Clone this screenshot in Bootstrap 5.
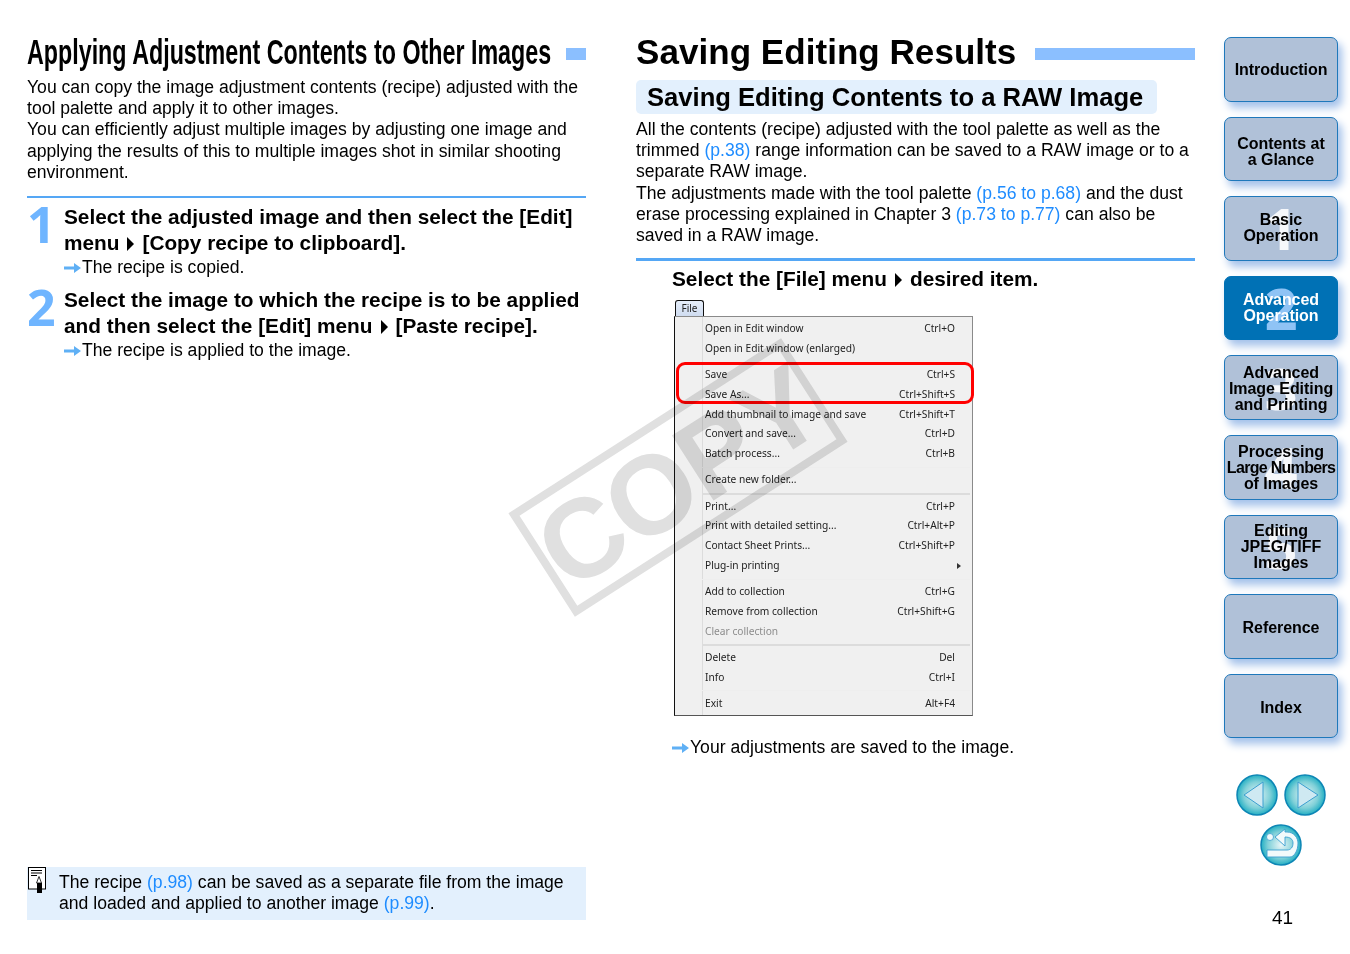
<!DOCTYPE html>
<html lang="en"><head><meta charset="utf-8"><title>Saving Editing Results</title>
<link href="https://cdn.jsdelivr.net/npm/bootstrap@5.3.0/dist/css/bootstrap.min.css" rel="stylesheet">
<style>
html,body{height:954px;overflow:hidden;background:#fff}
body{font-family:"Liberation Sans",Arial,sans-serif;color:#000;font-size:17.6px;line-height:21.2px}
.pg{height:954px;padding-left:27px}
.lcol{width:559px;margin-right:50px;padding-top:33px;padding-bottom:34px}
.rcol{width:559px;margin-right:29px;padding-top:33px;position:relative}
.navc{width:114px;padding-top:37px}
.ttlw{width:524px;flex:none;height:38px}
.ttl-l{display:inline-block;font-size:35px;line-height:38px;font-weight:700;margin:0;white-space:nowrap;transform:scaleX(.665);transform-origin:0 0}
.ttl-r{font-size:35px;line-height:38px;font-weight:700;margin:0;white-space:nowrap;letter-spacing:.05px}
.tbar{background:#8bbfff;height:12px;margin-top:3px}
.sub{background:#e3f0fd;border-radius:5px;font-size:25.6px;line-height:34px;font-weight:700;margin:9px 0 0;padding:0 14px 0 11px;display:inline-block;white-space:nowrap}
.para{margin:0}
.ln{color:#1e8cff;text-decoration:none}
.rule{height:3px;background:#55a7f5}
.stp{font-size:20.8px;line-height:26px;font-weight:700;margin:0}
.num{width:37px;font-family:"Open Sans",sans-serif;font-weight:700;font-size:50px;line-height:40px;color:#6fb5ff;flex:none}
.tri{display:inline-block;border-left:7px solid #000;border-top:7px solid transparent;border-bottom:7px solid transparent;margin:0 8px 0 8px;vertical-align:-1px}
.arw{width:18px;height:12px;vertical-align:-1px}
.res{margin-top:1px}
.tip{background:#e3f0fd;height:53px;padding:5px 0 0 32px;position:relative}
.tipic{position:absolute;left:1px;top:0;width:18px;height:26px}
.shot{width:299px;margin-left:38px}
.ftab{width:29px;height:16px;margin-top:0;border:1px solid #111;border-bottom:0;border-radius:3px 3px 0 0;background:linear-gradient(#e6eefa,#cfdcf0);font:10px/15px "Noto Sans",sans-serif;text-align:center;color:#222;margin-left:1px}
.mnu{height:400px;background:#f0f0f0;border:1px solid #8a8a8a;border-left:1px solid #111;border-bottom-color:#555;padding:2px 17px 0 1px;position:relative;font:10.2px/19.7px "Noto Sans",sans-serif;color:#222}
.gut{position:absolute;left:27px;top:0;bottom:0;width:1px;background:#dcdcdc}
.mi{padding-left:29px;height:19.7px;white-space:nowrap}
.gap{height:6.7px;margin-left:26px;position:relative}
.gap::after{content:"";position:absolute;left:0;right:-15px;top:3px;height:1px;background:#eee}
.gap.dk::after{background:#dcdcdc;height:2px}
.off{color:#8c8c8c}
.sel{position:absolute;left:1px;top:45px;width:298px;height:42px;border:3px solid #f00;border-radius:9px}
.wm{position:absolute;left:-120px;top:416px;width:324px;height:123px;transform:rotate(-32.7deg);border:8px solid #8a8a8a;opacity:.27;pointer-events:none;font:700 112px/107px "Liberation Sans",sans-serif;color:#8a8a8a;text-align:center;letter-spacing:-2px;overflow:hidden;mix-blend-mode:multiply}
.nb{height:64.6px;background:#b0c1d8;border:1px solid #1e78bb;border-radius:7px;box-shadow:4px 6px 8px #a3c1ea;font-size:16px;line-height:16px;font-weight:700;position:relative;text-align:center;color:#000;letter-spacing:-.05px}
.nb.on{background:#0071b5;border-color:#0071b5;color:#fff}
.big{position:absolute;inset:0;display:flex;align-items:center;justify-content:center;font-family:"Open Sans",sans-serif;font-weight:700;font-size:58px;line-height:1;color:rgba(255,255,255,.88)}
.nb.on .big{color:#8fc3f5}
.nt{position:relative;white-space:nowrap}
.rbtn{width:42px;height:42px;display:block}
.pno{font-size:19px;line-height:22px;padding-left:48px}
.nudge1{top:1px}
.nudge2{top:2px}
.nudge3{top:3px}
</style></head><body>
<div class="pg d-flex">
 <div class="lcol d-flex flex-column">
  <div class="d-flex align-items-center justify-content-between"><div class="ttlw"><h1 class="ttl-l">Applying Adjustment Contents to Other Images</h1></div><div class="tbar" style="width:20px"></div></div>
  <p class="para" style="margin-top:6px">You can copy the image adjustment contents (recipe) adjusted with the tool palette and apply it to other images.<br>You can efficiently adjust multiple images by adjusting one image and applying the results of this to multiple images shot in similar shooting environment.</p>
  <div class="rule" style="height:2px;margin-top:13px"></div>
  <div class="d-flex" style="margin-top:6px">
   <div class="num">1</div>
   <div><p class="stp">Select the adjusted image and then select the [Edit] menu<span class="tri"></span>[Copy recipe to clipboard].</p>
   <div class="res"><svg class="arw" viewBox="0 0 18 12"><path d="M0 4.5h10V1l7 5-7 5V7.5H0z" fill="#5fb0f5"/></svg>The recipe is copied.</div></div>
  </div>
  <div class="d-flex" style="margin-top:9px">
   <div class="num">2</div>
   <div><p class="stp">Select the image to which the recipe is to be applied and then select the [Edit] menu<span class="tri"></span>[Paste recipe].</p>
   <div class="res"><svg class="arw" viewBox="0 0 18 12"><path d="M0 4.5h10V1l7 5-7 5V7.5H0z" fill="#5fb0f5"/></svg>The recipe is applied to the image.</div></div>
  </div>
  <div class="tip mt-auto">
   <svg class="tipic" viewBox="0 0 18 26"><rect x=".5" y=".5" width="17" height="21.5" fill="#fff" stroke="#000"/><path d="M3 3.5h11M3 6h11M3 8.5h6" stroke="#000"/><path d="M11.5 9.5l2.500 6.500h-5z" fill="#fff" stroke="#000" stroke-width=".8" transform="translate(-.5 0)"/><rect x="9" y="16" width="5" height="10" fill="#000"/></svg>
   The recipe <a class="ln" href="#">(p.98)</a> can be saved as a separate file from the image and loaded and applied to another image <a class="ln" href="#">(p.99)</a>.
  </div>
 </div>
 <div class="rcol">
  <div class="d-flex align-items-center"><h1 class="ttl-r">Saving Editing Results</h1><div class="tbar flex-grow-1" style="margin-left:19px"></div></div>
  <h2 class="sub">Saving Editing Contents to a RAW Image</h2>
  <p class="para" style="margin-top:5px">All the contents (recipe) adjusted with the tool palette as well as the trimmed <a class="ln" href="#">(p.38)</a> range information can be saved to a RAW image or to a separate RAW image.<br>The adjustments made with the tool palette <a class="ln" href="#">(p.56 to p.68)</a> and the dust erase processing explained in Chapter 3 <a class="ln" href="#">(p.73 to p.77)</a> can also be saved in a RAW image.</p>
  <div class="rule" style="margin-top:12px"></div>
  <p class="stp" style="margin:5px 0 8px 36px">Select the [File] menu<span class="tri"></span>desired item.</p>
  <div class="shot">
   <div class="ftab">File</div>
   <div class="mnu">
    <div class="gut"></div>
    <div class="mi d-flex justify-content-between"><span>Open in Edit window</span><span>Ctrl+O</span></div>
    <div class="mi">Open in Edit window (enlarged)</div>
    <div class="gap"></div>
    <div class="mi d-flex justify-content-between"><span>Save</span><span>Ctrl+S</span></div>
    <div class="mi d-flex justify-content-between"><span>Save As...</span><span>Ctrl+Shift+S</span></div>
    <div class="mi d-flex justify-content-between"><span>Add thumbnail to image and save</span><span>Ctrl+Shift+T</span></div>
    <div class="mi d-flex justify-content-between"><span>Convert and save...</span><span>Ctrl+D</span></div>
    <div class="mi d-flex justify-content-between"><span>Batch process...</span><span>Ctrl+B</span></div>
    <div class="gap"></div>
    <div class="mi">Create new folder...</div>
    <div class="gap dk"></div>
    <div class="mi d-flex justify-content-between"><span>Print...</span><span>Ctrl+P</span></div>
    <div class="mi d-flex justify-content-between"><span>Print with detailed setting...</span><span>Ctrl+Alt+P</span></div>
    <div class="mi d-flex justify-content-between"><span>Contact Sheet Prints...</span><span>Ctrl+Shift+P</span></div>
    <div class="mi d-flex justify-content-between position-relative"><span>Plug-in printing</span><svg style="position:absolute;right:-6px;top:7px;width:4px;height:6px" viewBox="0 0 4 6"><path d="M0 0l4 3-4 3z" fill="#333"/></svg></div>
    <div class="gap"></div>
    <div class="mi d-flex justify-content-between"><span>Add to collection</span><span>Ctrl+G</span></div>
    <div class="mi d-flex justify-content-between"><span>Remove from collection</span><span>Ctrl+Shift+G</span></div>
    <div class="mi off">Clear collection</div>
    <div class="gap dk"></div>
    <div class="mi d-flex justify-content-between"><span>Delete</span><span>Del</span></div>
    <div class="mi d-flex justify-content-between"><span>Info</span><span>Ctrl+I</span></div>
    <div class="gap"></div>
    <div class="mi d-flex justify-content-between"><span>Exit</span><span>Alt+F4</span></div>
    <div class="sel"></div>
   </div>
  </div>
  <div style="margin:21px 0 0 36px"><svg class="arw" viewBox="0 0 18 12"><path d="M0 4.5h10V1l7 5-7 5V7.5H0z" fill="#5fb0f5"/></svg>Your adjustments are saved to the image.</div>
  <div class="wm">COPY</div>
 </div>
 <div class="navc">
  <nav class="d-flex flex-column" style="gap:15px">
   <a class="nb d-flex align-items-center justify-content-center text-decoration-none"><span class="nt nudge1">Introduction</span></a>
   <a class="nb d-flex align-items-center justify-content-center text-decoration-none"><span class="nt nudge3">Contents at<br>a Glance</span></a>
   <a class="nb d-flex align-items-center justify-content-center text-decoration-none"><span class="big">1</span><span class="nt">Basic<br>Operation</span></a>
   <a class="nb on d-flex align-items-center justify-content-center text-decoration-none"><span class="big">2</span><span class="nt">Advanced<br>Operation</span></a>
   <a class="nb d-flex align-items-center justify-content-center text-decoration-none"><span class="big">3</span><span class="nt nudge1">Advanced<br>Image Editing<br>and Printing</span></a>
   <a class="nb d-flex align-items-center justify-content-center text-decoration-none"><span class="big">4</span><span class="nt nudge1">Processing<br><span style="letter-spacing:-.7px">Large Numbers</span><br>of Images</span></a>
   <a class="nb d-flex align-items-center justify-content-center text-decoration-none"><span class="big">5</span><span class="nt">Editing<br>JPEG/TIFF<br>Images</span></a>
   <a class="nb d-flex align-items-center justify-content-center text-decoration-none"><span class="nt nudge2">Reference</span></a>
   <a class="nb d-flex align-items-center justify-content-center text-decoration-none"><span class="nt nudge2">Index</span></a>
  </nav>
  <svg width="0" height="0" class="position-absolute"><defs><radialGradient id="rg" cx=".5" cy=".5" r=".55"><stop offset="0" stop-color="#eaf6f8"/><stop offset=".6" stop-color="#7fd0d8"/><stop offset="1" stop-color="#08a5bd"/></radialGradient></defs></svg>
  <div class="d-flex justify-content-center" style="gap:6px;margin-top:36px">
   <svg class="rbtn" viewBox="0 0 42 42"><circle cx="21" cy="21" r="20" fill="url(#rg)" stroke="#0d86b5" stroke-width="1.5"/><path d="M27 8v26L8 21z" fill="#cfe9f2" stroke="#3b9fd0" stroke-width="1"/></svg>
   <svg class="rbtn" viewBox="0 0 42 42"><circle cx="21" cy="21" r="20" fill="url(#rg)" stroke="#0d86b5" stroke-width="1.5"/><path d="M14 8v26l20-13z" fill="#cfe9f2" stroke="#3b9fd0" stroke-width="1"/></svg>
  </div>
  <div class="d-flex justify-content-center" style="margin-top:8px">
   <svg class="rbtn" viewBox="0 0 42 42"><circle cx="21" cy="21" r="20" fill="url(#rg)" stroke="#0d86b5" stroke-width="1.5"/><circle cx="10" cy="13" r="3.5" fill="#f2fafb" stroke="#3b9fd0" stroke-width=".8"/><path d="M15 13L25 5V8H27C34 8 38 14 38 19C38 27 34 33 30 33H7V26H27C31 26 33 23 33 19C33 15 30 13 25 13V22Z" fill="#f2fafb" stroke="#3b9fd0" stroke-width=".9"/></svg>
  </div>
  <div class="pno" style="margin-top:41px">41</div>
 </div>
</div>
<script src="https://cdn.jsdelivr.net/npm/bootstrap@5.3.0/dist/js/bootstrap.bundle.min.js"></script>
</body></html>
